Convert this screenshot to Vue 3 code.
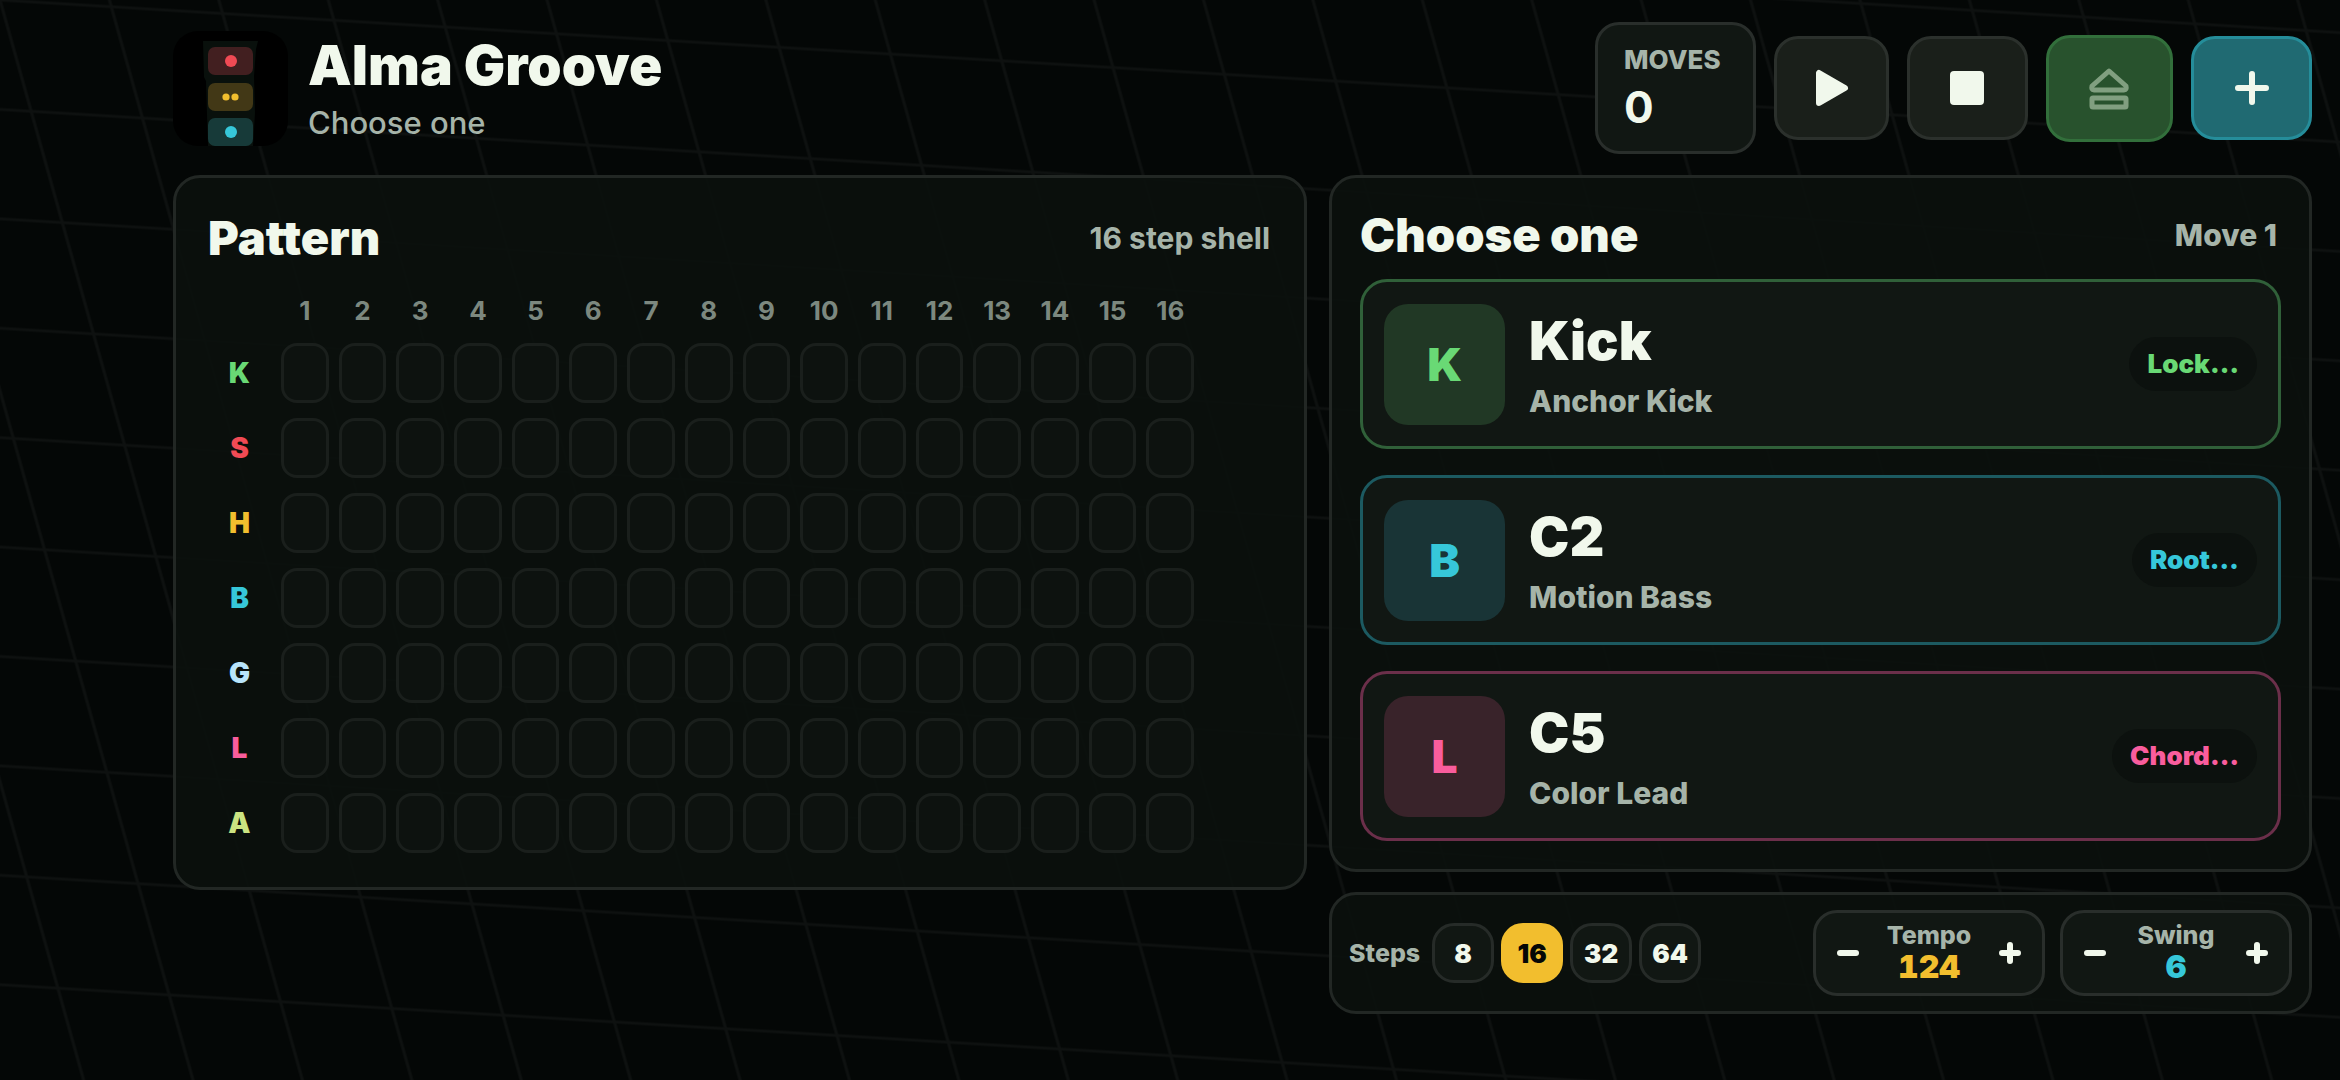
<script setup>
import { ref } from 'vue'

const moves = ref(0)
const steps = ref(16)
const tempo = ref(124)
const swing = ref(6)

const stepOptions = [8, 16, 32, 64]

const tracks = [
    { key: 'K', tone: 'green' },
    { key: 'S', tone: 'red' },
    { key: 'H', tone: 'yellow' },
    { key: 'B', tone: 'cyan' },
    { key: 'G', tone: 'ice' },
    { key: 'L', tone: 'pink' },
    { key: 'A', tone: 'lime' },
]

const choices = [
    { key: 'K', title: 'Kick', sub: 'Anchor Kick', tag: 'Lock…', tone: 'green' },
    { key: 'B', title: 'C2', sub: 'Motion Bass', tag: 'Root…', tone: 'cyan' },
    { key: 'L', title: 'C5', sub: 'Color Lead', tag: 'Chord…', tone: 'pink' },
]
</script>

<template>
    <div class="page">
        <svg class="backdrop" aria-hidden="true">
            <defs>
                <pattern
                    id="mesh"
                    width="111.3"
                    height="111.3"
                    patternUnits="userSpaceOnUse"
                    patternTransform="matrix(1 0.0607 0.28 1 0 0)"
                >
                    <path d="M0 0H111.3M0 111.3H111.3M0 0V111.3M111.3 0V111.3" stroke="#fff" stroke-opacity="0.04" stroke-width="3" />
                </pattern>
            </defs>
            <rect width="100%" height="100%" fill="url(#mesh)" />
        </svg>

        <header class="topbar">
            <svg class="logo" viewBox="0 0 115 115" aria-hidden="true">
                <rect width="115" height="115" rx="25" fill="#000" />
                <path d="M30 10H85L83 18L81 45L82 82L80 115H35L34 84L33 50L31 46Z" fill="#09100c" />
                <rect x="35" y="16" width="45" height="28" rx="7" fill="#421f20" />
                <rect x="35" y="52" width="45" height="28" rx="7" fill="#423816" />
                <rect x="35" y="87" width="45" height="28" rx="7" fill="#173a39" />
                <circle cx="58" cy="30" r="6" fill="#f04a54" />
                <circle cx="53" cy="66" r="3.6" fill="#f2be2e" />
                <circle cx="62" cy="66" r="3.6" fill="#f2be2e" />
                <circle cx="58" cy="101" r="6" fill="#36c7d9" />
            </svg>
            <div class="brand">
                <h1>Alma Groove</h1>
                <p>Choose one</p>
            </div>
            <div class="moves">
                <span class="moves-label">MOVES</span>
                <span class="moves-value">{{ moves }}</span>
            </div>
            <button class="action play" aria-label="Play">
                <svg viewBox="0 0 48 48"><path d="M11 9V39L37 24Z" fill="#f1f8ec" stroke="#f1f8ec" stroke-width="6" stroke-linejoin="round" /></svg>
            </button>
            <button class="action stop" aria-label="Stop">
                <svg viewBox="0 0 48 48"><rect x="6" y="7" width="34" height="34" rx="4" fill="#f1f8ec" /></svg>
            </button>
            <button class="action eject" aria-label="Export" disabled>
                <svg viewBox="0 0 48 48" fill="none" stroke="#819f80" stroke-width="5" stroke-linejoin="round">
                    <path d="M23 7L40 22Q41 26 38 26H8Q5 26 6 22Z" />
                    <rect x="6" y="34" width="34" height="9" rx="1" />
                </svg>
            </button>
            <button class="action add" aria-label="New">
                <svg viewBox="0 0 48 48"><path d="M24 10V38M10 24H38" stroke="#f1f8ec" stroke-width="6" stroke-linecap="round" /></svg>
            </button>
        </header>

        <main class="columns">
            <section class="panel pattern">
                <div class="panel-head">
                    <h2>Pattern</h2>
                    <span class="note light">16 step shell</span>
                </div>
                <div class="sequencer">
                    <div class="row numbers">
                        <span></span>
                        <span v-for="n in 16" :key="n">{{ n }}</span>
                    </div>
                    <div v-for="track in tracks" :key="track.key" class="row" :class="track.tone">
                        <span class="track">{{ track.key }}</span>
                        <button v-for="n in 16" :key="n" class="cell" :aria-label="`${track.key} step ${n}`"></button>
                    </div>
                </div>
            </section>

            <div class="side">
                <section class="panel chooser">
                    <div class="panel-head">
                        <h2>Choose one</h2>
                        <span class="note">Move 1</span>
                    </div>
                    <div class="choices">
                        <button v-for="c in choices" :key="c.key" class="choice" :class="c.tone">
                            <span class="badge">{{ c.key }}</span>
                            <span class="choice-text">
                                <span class="choice-title">{{ c.title }}</span>
                                <span class="choice-sub">{{ c.sub }}</span>
                            </span>
                            <span class="tag">{{ c.tag }}</span>
                        </button>
                    </div>
                </section>

                <section class="panel controls">
                    <span class="steps-label">Steps</span>
                    <div class="steps">
                        <button
                            v-for="s in stepOptions"
                            :key="s"
                            class="step"
                            :class="{ active: s === steps }"
                            @click="steps = s"
                        >{{ s }}</button>
                    </div>
                    <div class="stepper">
                        <button aria-label="Tempo down" @click="tempo--">
                            <svg viewBox="0 0 24 24"><path d="M4 12H20" /></svg>
                        </button>
                        <div class="readout">
                            <span class="readout-label">Tempo</span>
                            <span class="readout-value yellow">{{ tempo }}</span>
                        </div>
                        <button aria-label="Tempo up" @click="tempo++">
                            <svg viewBox="0 0 24 24"><path d="M4 12H20M12 4V20" /></svg>
                        </button>
                    </div>
                    <div class="stepper">
                        <button aria-label="Swing down" @click="swing--">
                            <svg viewBox="0 0 24 24"><path d="M4 12H20" /></svg>
                        </button>
                        <div class="readout">
                            <span class="readout-label">Swing</span>
                            <span class="readout-value cyan">{{ swing }}</span>
                        </div>
                        <button aria-label="Swing up" @click="swing++">
                            <svg viewBox="0 0 24 24"><path d="M4 12H20M12 4V20" /></svg>
                        </button>
                    </div>
                </section>
            </div>
        </main>
    </div>
</template>

<style>
body {
    background: #040706;
}
</style>

<style scoped>
.page {
    position: relative;
    box-sizing: border-box;
    min-height: 100vh;
    padding: 22px 28px 22px 173px;
    font-family: Inter, sans-serif;
    color: #f1f8ec;
}

.page * {
    box-sizing: border-box;
}

.backdrop {
    position: absolute;
    top: 0;
    left: 0;
    width: 100%;
    height: 100%;
}

button {
    margin: 0;
    padding: 0;
    border: 0;
    background: none;
    font: inherit;
    color: inherit;
}

h1,
h2,
p {
    margin: 0;
}

.green { --tone: #69d975; --edge: #306039; --fill: #213825; }
.red { --tone: #f04a54; }
.yellow { --tone: #f2be2e; }
.cyan { --tone: #36c7d9; --edge: #1c5a61; --fill: #193436; }
.ice { --tone: #b8e4fb; }
.pink { --tone: #f95d9d; --edge: #6b2f4a; --fill: #39232a; }
.lime { --tone: #cbe381; }

.topbar {
    position: relative;
    display: flex;
    align-items: center;
    gap: 18px;
    height: 132px;
    margin-bottom: 21px;
}

.logo {
    width: 115px;
    height: 115px;
}

.brand {
    flex: 1;
    padding-left: 2px;
}

.brand h1 {
    font-size: 55px;
    line-height: 64px;
    font-weight: 900;
}

.brand p {
    margin-top: 6px;
    font-size: 31px;
    line-height: 40px;
    font-weight: 500;
    color: #a6b4a9;
}

.moves {
    display: flex;
    flex-direction: column;
    width: 161px;
    height: 132px;
    padding: 19px 26px;
    border: 3px solid #292e2b;
    border-radius: 24px;
    background: #111713;
}

.moves-label {
    font-size: 26px;
    line-height: 32px;
    font-weight: 800;
    color: #a6b4a9;
}

.moves-value {
    margin-top: 5px;
    font-size: 44px;
    line-height: 52px;
    font-weight: 700;
}

.action {
    display: flex;
    align-items: center;
    justify-content: center;
    width: 121px;
    height: 104px;
    border: 3px solid #2b302c;
    border-radius: 24px;
    background: #1a1f1a;
}

.action svg {
    width: 48px;
    height: 48px;
}

.play {
    width: 115px;
}

.eject {
    width: 127px;
    height: 107px;
    border-color: #326f3b;
    background: #28522d;
}

.add {
    border-color: #258d9a;
    background: #206a72;
}

.columns {
    position: relative;
    display: grid;
    grid-template-columns: 15fr 13fr;
    gap: 22px;
    align-items: start;
}

.panel {
    border: 3px solid #222724;
    border-radius: 27px;
    background: rgba(11, 16, 13, 0.93);
}

.panel-head {
    display: flex;
    align-items: center;
    justify-content: space-between;
}

.panel-head h2 {
    font-size: 47px;
    line-height: 56px;
    font-weight: 900;
}

.note {
    font-size: 30px;
    line-height: 36px;
    font-weight: 800;
    color: #a6b4a9;
}

.note.light {
    font-weight: 700;
}

.pattern {
    padding: 32px 34px 34px 32px;
}

.sequencer {
    display: flex;
    flex-direction: column;
    gap: 15px;
    margin-top: 28px;
    padding-right: 76px;
}

.row {
    display: grid;
    grid-template-columns: 63px repeat(16, 1fr);
    gap: 10px;
    align-items: center;
    text-align: center;
}

.numbers {
    font-size: 26px;
    line-height: 34px;
    font-weight: 700;
    color: #7c887f;
}

.track {
    font-size: 28px;
    line-height: 36px;
    font-weight: 900;
    color: var(--tone);
}

.cell {
    height: 60px;
    border: 3px solid #1a1f1c;
    border-radius: 16px;
    background: #0d120f;
}

.side {
    display: flex;
    flex-direction: column;
    gap: 20px;
}

.chooser {
    padding: 29px 28px 28px;
}

.chooser .panel-head {
    padding-right: 4px;
}

.choices {
    display: flex;
    flex-direction: column;
    gap: 26px;
    margin-top: 16px;
}

.choice {
    display: flex;
    align-items: center;
    gap: 24px;
    height: 170px;
    padding: 0 21px;
    border: 3px solid var(--edge);
    border-radius: 27px;
    background: #111713;
    text-align: left;
}

.badge {
    width: 121px;
    height: 121px;
    border-radius: 24px;
    background: var(--fill);
    font-size: 46px;
    line-height: 121px;
    font-weight: 900;
    text-align: center;
    color: var(--tone);
}

.choice-text {
    display: flex;
    flex: 1;
    flex-direction: column;
}

.choice-title {
    font-size: 54px;
    line-height: 64px;
    font-weight: 900;
}

.choice-sub {
    margin-top: 10px;
    font-size: 30px;
    line-height: 36px;
    font-weight: 800;
    color: #a6b4a9;
}

.tag {
    padding: 0 18px;
    border-radius: 27px;
    background: #0c110e;
    font-size: 26px;
    line-height: 54px;
    font-weight: 900;
    color: var(--tone);
}

.controls {
    display: flex;
    align-items: center;
    gap: 15px;
    padding: 15px 17px;
}

.steps-label {
    width: 68px;
    font-size: 25px;
    font-weight: 800;
    color: #a6b4a9;
}

.steps {
    display: flex;
    flex: 1;
    gap: 7px;
}

.step {
    width: 62px;
    height: 60px;
    border: 3px solid #262b28;
    border-radius: 22px;
    background: #111713;
    font-size: 26px;
    font-weight: 900;
}

.step.active {
    border-color: #f2be2e;
    background: #f2be2e;
    color: #050706;
}

.stepper {
    display: flex;
    align-items: center;
    justify-content: space-between;
    width: 232px;
    height: 86px;
    padding: 0 16px;
    border: 3px solid #292e2b;
    border-radius: 24px;
    background: #111713;
}

.stepper button {
    display: flex;
    align-items: center;
    justify-content: center;
    width: 32px;
    height: 60px;
}

.stepper svg {
    width: 24px;
    height: 24px;
    stroke: #f1f8ec;
    stroke-width: 6;
    stroke-linecap: round;
}

.readout {
    display: flex;
    flex-direction: column;
    align-items: center;
}

.readout-label {
    font-size: 25px;
    line-height: 28px;
    font-weight: 800;
    color: #a6b4a9;
}

.readout-value {
    font-size: 32px;
    line-height: 36px;
    font-weight: 900;
    font-variant-numeric: tabular-nums;
    color: var(--tone);
}
</style>
